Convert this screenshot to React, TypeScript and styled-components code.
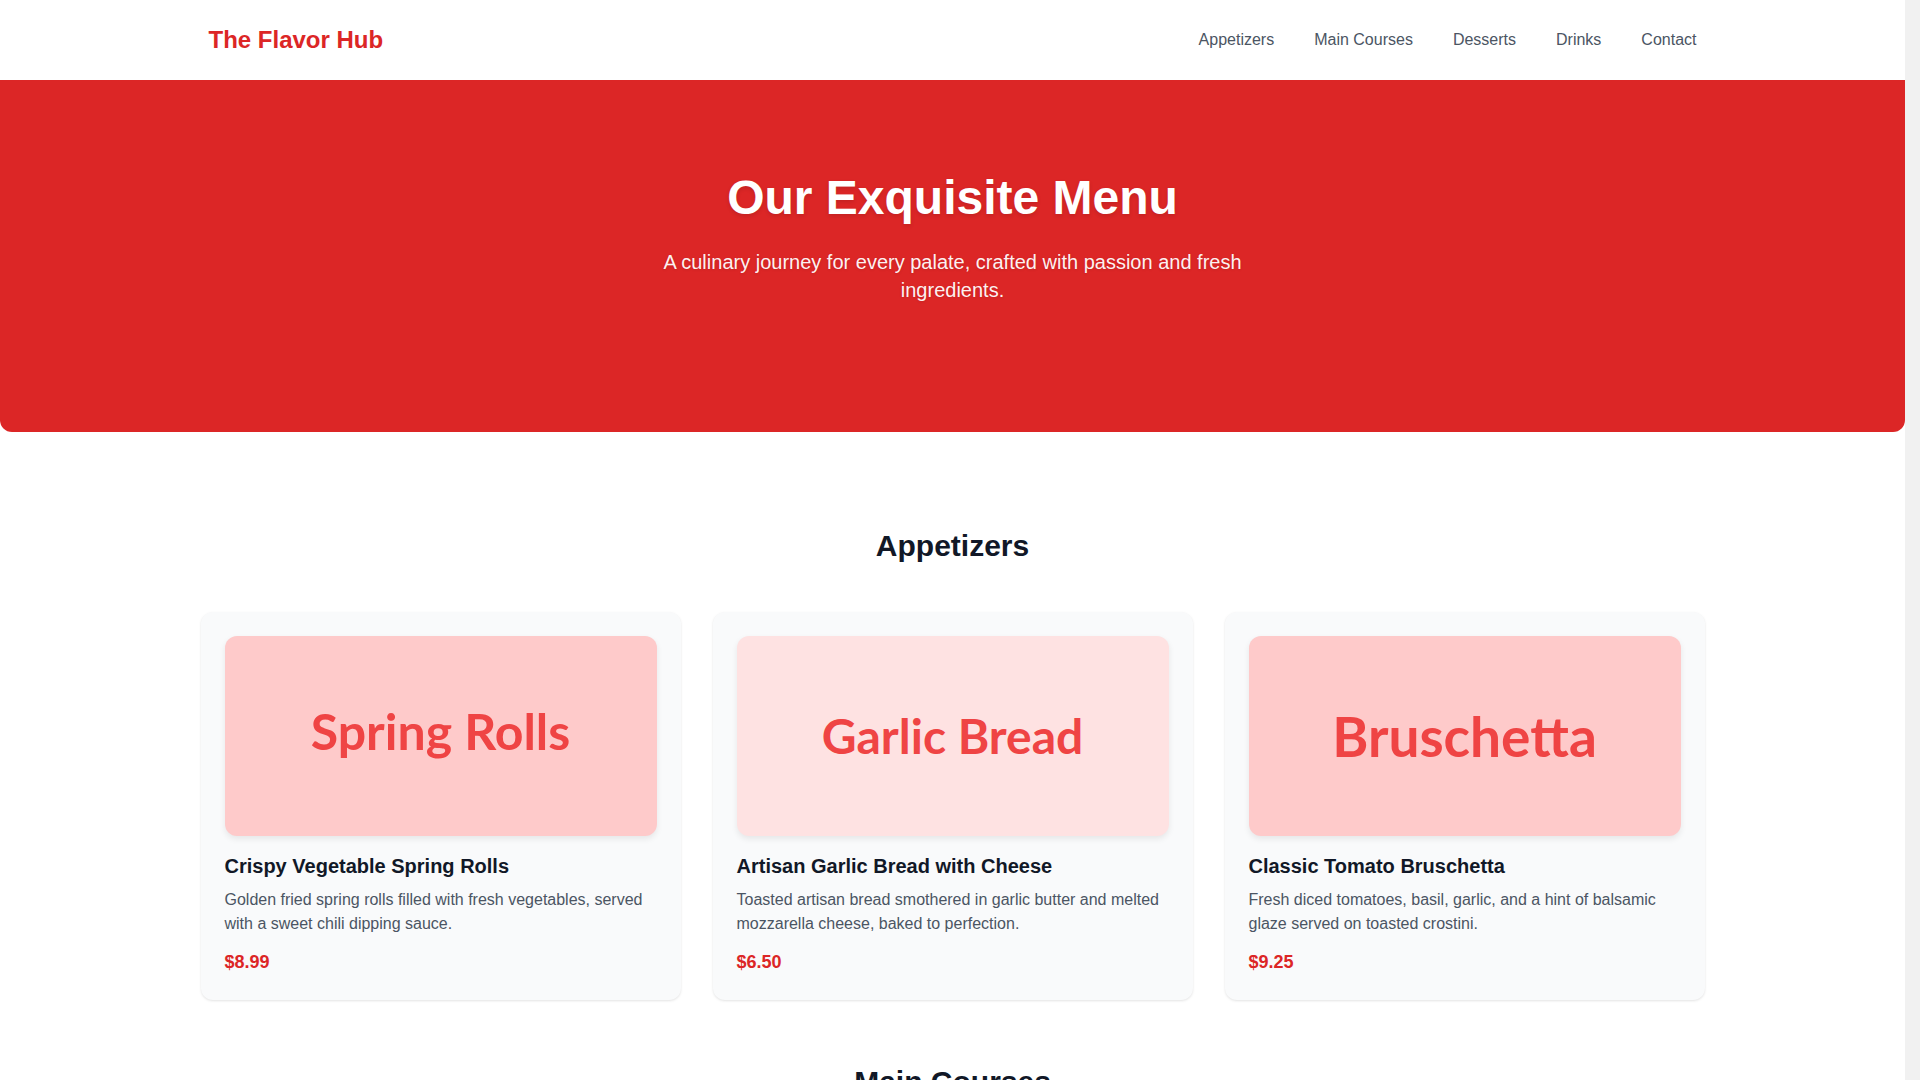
import styled, { createGlobalStyle } from 'styled-components';

type MenuItem = {
  id: string;
  label: string;
  labelSize: number;
  title: string;
  description: string;
  price: string;
  tint: 'light' | 'medium';
  lift?: number;
};

type MenuSection = {
  id: string;
  name: string;
  items: MenuItem[];
};

const sections: MenuSection[] = [
  {
    id: 'appetizers',
    name: 'Appetizers',
    items: [
      {
        id: 'spring-rolls',
        label: 'Spring Rolls',
        labelSize: 50,
        title: 'Crispy Vegetable Spring Rolls',
        description:
          'Golden fried spring rolls filled with fresh vegetables, served with a sweet chili dipping sauce.',
        price: '$8.99',
        tint: 'medium',
        lift: 5,
      },
      {
        id: 'garlic-bread',
        label: 'Garlic Bread',
        labelSize: 48,
        title: 'Artisan Garlic Bread with Cheese',
        description:
          'Toasted artisan bread smothered in garlic butter and melted mozzarella cheese, baked to perfection.',
        price: '$6.50',
        tint: 'light',
      },
      {
        id: 'bruschetta',
        label: 'Bruschetta',
        labelSize: 55,
        title: 'Classic Tomato Bruschetta',
        description:
          'Fresh diced tomatoes, basil, garlic, and a hint of balsamic glaze served on toasted crostini.',
        price: '$9.25',
        tint: 'medium',
      },
    ],
  },
  {
    id: 'main-courses',
    name: 'Main Courses',
    items: [
      {
        id: 'steak',
        label: 'Ribeye Steak',
        labelSize: 48,
        title: 'Grilled Ribeye Steak',
        description:
          'A juicy ribeye grilled to your liking, served with roasted potatoes and seasonal vegetables.',
        price: '$28.99',
        tint: 'medium',
      },
      {
        id: 'salmon',
        label: 'Salmon',
        labelSize: 56,
        title: 'Lemon Herb Salmon',
        description:
          'Pan-seared salmon fillet with a lemon herb butter sauce, served over wild rice.',
        price: '$22.50',
        tint: 'light',
      },
      {
        id: 'pasta',
        label: 'Pasta',
        labelSize: 56,
        title: 'Creamy Mushroom Pasta',
        description:
          'Fettuccine tossed in a rich parmesan cream sauce with sautéed wild mushrooms.',
        price: '$17.75',
        tint: 'medium',
      },
    ],
  },
  {
    id: 'desserts',
    name: 'Desserts',
    items: [
      {
        id: 'lava-cake',
        label: 'Lava Cake',
        labelSize: 54,
        title: 'Chocolate Lava Cake',
        description:
          'Warm chocolate cake with a molten center, served with vanilla bean ice cream.',
        price: '$8.50',
        tint: 'medium',
      },
      {
        id: 'tiramisu',
        label: 'Tiramisu',
        labelSize: 56,
        title: 'Classic Tiramisu',
        description:
          'Layers of espresso-soaked ladyfingers and mascarpone cream dusted with cocoa.',
        price: '$7.95',
        tint: 'light',
      },
      {
        id: 'cheesecake',
        label: 'Cheesecake',
        labelSize: 52,
        title: 'New York Cheesecake',
        description:
          'Creamy cheesecake on a graham cracker crust topped with fresh berry compote.',
        price: '$7.25',
        tint: 'medium',
      },
    ],
  },
];

const navLinks = ['Appetizers', 'Main Courses', 'Desserts', 'Drinks', 'Contact'];

export default function App() {
  return (
    <>
      <GlobalStyle />
      <Header>
        <HeaderInner>
          <Logo href="#">The Flavor Hub</Logo>
          <Nav>
            {navLinks.map((link) => (
              <NavLink key={link} href="#">
                {link}
              </NavLink>
            ))}
          </Nav>
        </HeaderInner>
      </Header>

      <Hero>
        <HeroTitle>Our Exquisite Menu</HeroTitle>
        <HeroText>
          A culinary journey for every palate, crafted with passion and fresh
          ingredients.
        </HeroText>
      </Hero>

      <Main>
        {sections.map((section) => (
          <Section key={section.id} id={section.id}>
            <SectionTitle>{section.name}</SectionTitle>
            <CardGrid>
              {section.items.map((item) => (
                <Card key={item.id}>
                  <Picture $tint={item.tint}>
                    <PictureLabel $size={item.labelSize} $lift={item.lift ?? 0}>
                      {item.label}
                    </PictureLabel>
                  </Picture>
                  <CardTitle>{item.title}</CardTitle>
                  <CardText>{item.description}</CardText>
                  <Price>{item.price}</Price>
                </Card>
              ))}
            </CardGrid>
          </Section>
        ))}
      </Main>

      <Footer>© 2024 The Flavor Hub. All rights reserved.</Footer>
    </>
  );
}

// the gutter on the right stands in for the browser's scrollbar track
const GlobalStyle = createGlobalStyle`
  * {
    box-sizing: border-box;
  }
  body {
    margin: 0;
    min-height: 100vh;
    background: #ffffff;
    border-right: 15px solid #f1f1f1;
    font-family: "Liberation Sans", Arial, sans-serif;
    color: #111827;
  }
  a {
    text-decoration: none;
  }
`;

const Header = styled.header`
  background: #ffffff;
  height: 80px;
`;

const HeaderInner = styled.div`
  max-width: 1536px;
  height: 100%;
  margin: 0 auto;
  padding: 0 24px;
  display: flex;
  align-items: center;
  justify-content: space-between;
`;

const Logo = styled.a`
  color: #dc2626;
  font-size: 24px;
  line-height: 32px;
  font-weight: 700;
`;

const Nav = styled.nav`
  display: flex;
  gap: 40px;
`;

const NavLink = styled.a`
  color: #4b5563;
  font-size: 16px;
  line-height: 24px;
`;

const Hero = styled.section`
  background: #dc2626;
  color: #ffffff;
  text-align: center;
  padding: 94px 24px 128px;
  border-radius: 0 0 12px 12px;
`;

const HeroTitle = styled.h1`
  margin: 0 0 26px;
  font-size: 48px;
  line-height: 48px;
  font-weight: 700;
  text-shadow: 0 2px 4px rgba(0, 0, 0, 0.12);
`;

const HeroText = styled.p`
  margin: 0 auto;
  max-width: 672px;
  font-size: 20px;
  line-height: 28px;
  color: rgba(255, 255, 255, 0.95);
  text-shadow: 0 1px 3px rgba(0, 0, 0, 0.1);
`;

const Main = styled.main`
  max-width: 1536px;
  margin: 0 auto;
  padding: 96px 16px 0;
`;

const Section = styled.section`
  margin-bottom: 64px;
`;

const SectionTitle = styled.h2`
  margin: 0 0 48px;
  text-align: center;
  font-size: 30px;
  line-height: 36px;
  font-weight: 700;
  color: #111827;
`;

const CardGrid = styled.div`
  display: grid;
  grid-template-columns: repeat(3, 1fr);
  gap: 32px;
`;

const Card = styled.article`
  background: #f9fafb;
  border-radius: 12px;
  padding: 24px;
  box-shadow: 0 1px 3px rgba(0, 0, 0, 0.08), 0 1px 2px rgba(0, 0, 0, 0.04);
`;

const Picture = styled.div<{ $tint: 'light' | 'medium' }>`
  height: 200px;
  border-radius: 12px;
  margin-bottom: 16px;
  background: ${(p) => (p.$tint === 'light' ? '#fee2e2' : '#fecaca')};
  box-shadow: 0 3px 6px rgba(0, 0, 0, 0.08);
  display: flex;
  align-items: center;
  justify-content: center;
`;

const PictureLabel = styled.span<{ $size: number; $lift: number }>`
  font-family: Lato, "Noto Sans", sans-serif;
  font-weight: 700;
  font-size: ${(p) => p.$size}px;
  line-height: 1;
  color: #ef4444;
  transform: translateY(${(p) => -p.$lift}px);
`;

const CardTitle = styled.h3`
  margin: 0 0 8px;
  font-size: 20px;
  line-height: 28px;
  font-weight: 700;
  color: #111827;
`;

const CardText = styled.p`
  margin: 0 0 12px;
  font-size: 16px;
  line-height: 24px;
  color: #4b5563;
`;

const Price = styled.div`
  font-size: 18px;
  line-height: 28px;
  font-weight: 700;
  color: #dc2626;
`;

const Footer = styled.footer`
  background: #111827;
  color: #d1d5db;
  text-align: center;
  font-size: 14px;
  padding: 32px 16px;
`;
